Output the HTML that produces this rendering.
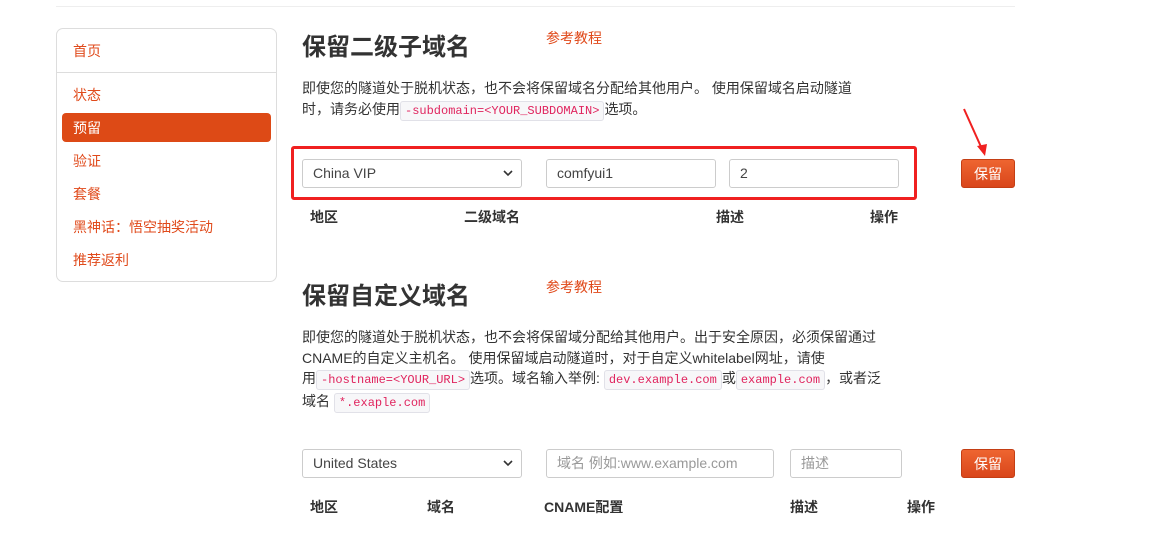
<!DOCTYPE html>
<html><head><meta charset="utf-8"><style>
body{margin:0;width:1176px;height:547px;background:#fff;position:relative;overflow:hidden;font-family:"Liberation Sans","Noto Sans CJK SC",sans-serif;color:#333;font-size:14px}
.a{position:absolute}
.or{color:#e04a1b}
.side{left:56px;top:28px;width:219px;height:252px;border:1px solid #ddd;border-radius:7px}
.si{position:absolute;left:16px;font-size:14px;color:#e04a1b;line-height:20px}
.act{position:absolute;left:5px;top:84px;width:209px;height:29px;background:#dd4a16;border-radius:4px}
h2{position:absolute;margin:0;font-size:24px;font-weight:bold;color:#333;line-height:36px}
.p{position:absolute;font-size:14px;line-height:20.5px;color:#333}
code{font-family:"Liberation Mono",monospace;font-size:12px;color:#e0245e;background:#f7f7f9;border:1px solid #e1e1e8;border-radius:3px;padding:2px 4px;white-space:nowrap}
.in{position:absolute;height:27px;border:1px solid #ccc;border-radius:3px;box-sizing:content-box;font-size:14px;line-height:27px;padding-left:10px;color:#444;background:#fff}
.ph{color:#999}
.btn{position:absolute;width:54px;height:29px;border-radius:3px;background:linear-gradient(#ee6530,#d9461b);color:#fff;font-size:14px;text-align:center;line-height:29px;border:1px solid #c43e14;box-sizing:border-box}
.th{position:absolute;font-weight:bold;font-size:14px;line-height:20px}
.chev{position:absolute;right:8px;top:9px}
</style></head><body>
<div class="a" style="left:56px;top:6px;width:959px;height:1px;background:#eee"></div>
<div class="a side">
<div class="si" style="top:12px">首页</div>
<div class="a" style="left:0;top:43px;width:219px;height:1px;background:#ddd"></div>
<div class="si" style="top:56px">状态</div>
<div class="act"></div>
<div class="si" style="top:89px;color:#fff">预留</div>
<div class="si" style="top:122px">验证</div>
<div class="si" style="top:155px">套餐</div>
<div class="si" style="top:188px">黑神话：悟空抽奖活动</div>
<div class="si" style="top:221px">推荐返利</div>
</div>

<h2 style="left:302px;top:30px">保留二级子域名</h2>
<div class="a or" style="left:546px;top:28px;font-size:14px">参考教程</div>
<div class="p" style="left:302px;top:78px;width:555px">即使您的隧道处于脱机状态，也不会将保留域名分配给其他用户。 使用保留域名启动隧道时，请务必使用<code>-subdomain=&lt;YOUR_SUBDOMAIN&gt;</code>选项。</div>
<div class="a" style="left:291px;top:146px;width:620px;height:48px;border:3px solid #f02020;border-radius:3px"></div>
<div class="in" style="left:302px;top:159px;width:208px">China VIP<svg class="chev" width="10" height="8"><path d="M1 2l4 4 4-4" stroke="#333" stroke-width="1.6" fill="none"/></svg></div>
<div class="in" style="left:546px;top:159px;width:158px">comfyui1</div>
<div class="in" style="left:729px;top:159px;width:158px">2</div>
<div class="btn" style="left:961px;top:159px">保留</div>
<svg class="a" style="left:958px;top:105px" width="35" height="55"><line x1="6" y1="4" x2="24" y2="44" stroke="#f02020" stroke-width="2"/><polygon points="19,41 29,39 27,51" fill="#f02020"/></svg>
<div class="th" style="left:310px;top:207px">地区</div>
<div class="th" style="left:464px;top:207px">二级域名</div>
<div class="th" style="left:716px;top:207px">描述</div>
<div class="th" style="left:870px;top:207px">操作</div>

<h2 style="left:302px;top:279px">保留自定义域名</h2>
<div class="a or" style="left:546px;top:277px;font-size:14px">参考教程</div>
<div class="p" style="left:302px;top:327px;width:580px">即使您的隧道处于脱机状态，也不会将保留域分配给其他用户。出于安全原因，必须保留通过CNAME的自定义主机名。 使用保留域启动隧道时，对于自定义whitelabel网址，请使用<code>-hostname=&lt;YOUR_URL&gt;</code>选项。域名输入举例: <code>dev.example.com</code>或<code>example.com</code>，或者泛域名 <code>*.exaple.com</code></div>
<div class="in" style="left:302px;top:449px;width:208px">United States<svg class="chev" width="10" height="8"><path d="M1 2l4 4 4-4" stroke="#333" stroke-width="1.6" fill="none"/></svg></div>
<div class="in ph" style="left:546px;top:449px;width:216px">域名 例如:www.example.com</div>
<div class="in ph" style="left:790px;top:449px;width:100px">描述</div>
<div class="btn" style="left:961px;top:449px">保留</div>
<div class="th" style="left:310px;top:497px">地区</div>
<div class="th" style="left:427px;top:497px">域名</div>
<div class="th" style="left:544px;top:497px">CNAME配置</div>
<div class="th" style="left:790px;top:497px">描述</div>
<div class="th" style="left:907px;top:497px">操作</div>
</body></html>
